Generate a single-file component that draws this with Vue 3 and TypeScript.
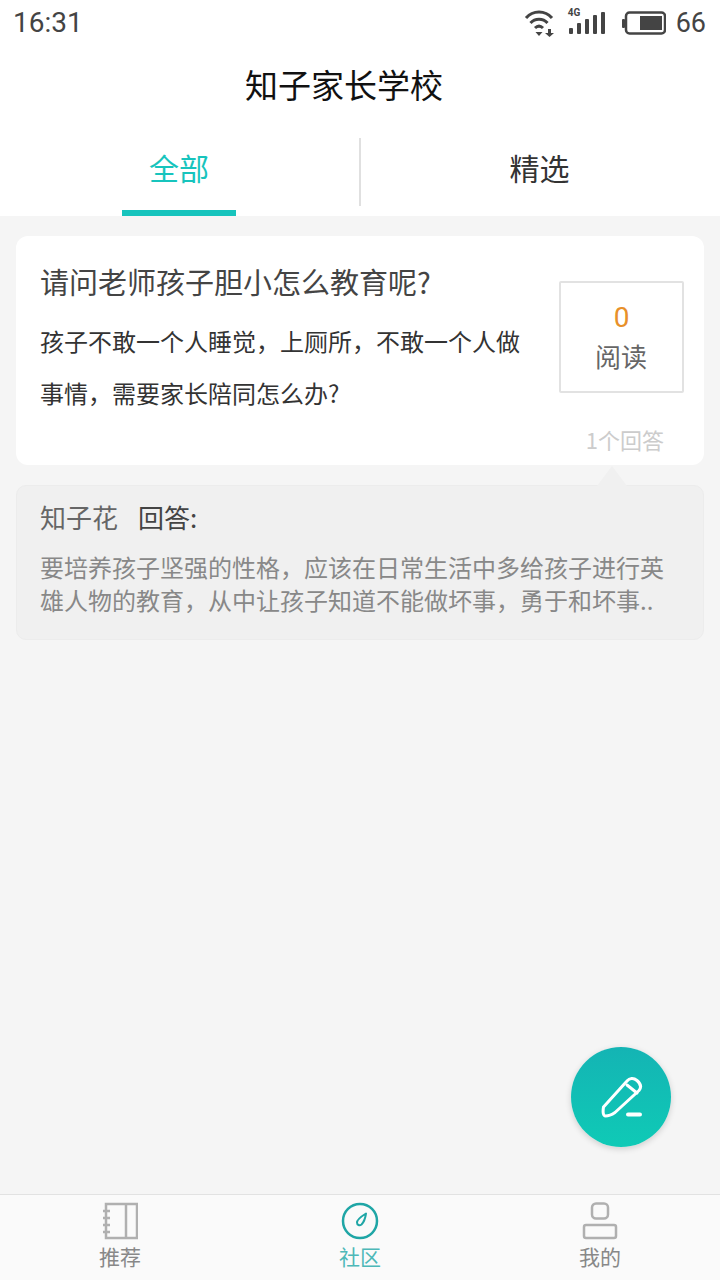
<template>
  <div class="page">
    <header class="status">
      <span class="status-time">16:31</span>
      <div class="status-right">
        <svg width="32" height="30" viewBox="0 0 32 30" class="wifi">
          <path d="M2 10 C9 2 21 2 28 10" fill="none" stroke="#444" stroke-width="3" />
          <path d="M6.500 15 C11 10 19 10 23.500 15" fill="none" stroke="#444" stroke-width="3" />
          <path d="M11 20 C13.500 17.500 16.500 17.500 19 20" fill="none" stroke="#444" stroke-width="3" />
          <path d="M11.500 24 H18.500 L15 28 Z" fill="#444" />
          <path d="M24 21 H27 V25 H30 L25.500 29 L21 25 H24 Z" fill="#444" />
        </svg>
        <div class="signal">
          <span class="net">4G</span>
          <svg width="38" height="24" viewBox="0 0 38 24">
            <rect x="1" y="17" width="4" height="6" rx="1" fill="#444" />
            <rect x="9" y="12" width="4" height="11" rx="1" fill="#444" />
            <rect x="17" y="8" width="4" height="15" rx="1" fill="#444" />
            <rect x="25" y="4" width="4" height="19" rx="1" fill="#444" />
            <rect x="33" y="1" width="4" height="22" rx="1" fill="#444" />
          </svg>
        </div>
        <svg width="44" height="24" viewBox="0 0 44 24" class="battery">
          <rect x="0" y="8" width="3" height="9" rx="1" fill="#444" />
          <rect x="4" y="1.500" width="39" height="21" rx="3.500" fill="none" stroke="#444" stroke-width="2.500" />
          <rect x="18" y="5" width="22" height="14" fill="#444" />
        </svg>
        <span class="status-level">66</span>
      </div>
    </header>

    <h1 class="title">知子家长学校</h1>

    <nav class="tabs">
      <div v-for="(tab, i) in tabs" :key="tab" class="tab" :class="{ 'tab--on': i === 0 }">
        {{ tab }}
      </div>
    </nav>

    <main class="content">
      <section class="card">
        <div class="card-main">
          <div class="card-text">
            <h2 class="question">请问老师孩子胆小怎么教育呢?</h2>
            <p class="desc">孩子不敢一个人睡觉，上厕所，不敢一个人做事情，需要家长陪同怎么办?</p>
          </div>
          <div class="reads">
            <span class="reads-num">0</span>
            <span class="reads-label">阅读</span>
          </div>
        </div>
        <div class="answers-count">1个回答</div>
      </section>

      <section class="answer">
        <div class="answer-head">
          <span class="answer-name">知子花</span>
          <span class="answer-tag">回答:</span>
        </div>
        <p class="answer-body">要培养孩子坚强的性格，应该在日常生活中多给孩子进行英雄人物的教育，从中让孩子知道不能做坏事，勇于和坏事..</p>
      </section>

      <button class="fab" type="button" aria-label="提问">
        <svg width="44" height="44" viewBox="0 0 44 44" fill="none" stroke="#fff" stroke-width="3" stroke-linecap="round" stroke-linejoin="round">
          <path d="M4.500 32 L28 6 C30.500 3 34.500 2.500 38 5.500 C42 9 42.500 12.500 40 15.500 L16 37.500 C13 39.500 9 41 6.500 41 C4.500 41 3.500 38 4.500 32 Z" />
          <path d="M28 10 L38 18" />
          <path d="M29 39.500 H41" stroke-width="4" />
        </svg>
      </button>
    </main>

    <footer class="bottom">
      <div class="bottom-item">
        <svg width="36" height="38" viewBox="0 0 36 38" fill="none" stroke="#b0b0b0" stroke-width="2.500">
          <rect x="4" y="2" width="31" height="34" />
          <path d="M24 2 V36" />
          <path d="M1 9 H8 M1 16 H8 M1 23 H8 M1 30 H8" />
        </svg>
        <span>推荐</span>
      </div>
      <div class="bottom-item bottom-item--on">
        <svg width="38" height="38" viewBox="0 0 38 38" fill="none" stroke="#1fa6a6">
          <circle cx="19" cy="19" r="17" stroke-width="2.500" />
          <path d="M25 11.500 C24.500 15 23 20 20.500 22.500 C18.500 24 16 23 16 20.500 C16 18 21 14 25 11.500 Z" stroke-width="2" stroke-linejoin="round" />
        </svg>
        <span>社区</span>
      </div>
      <div class="bottom-item">
        <svg width="36" height="38" viewBox="0 0 36 38" fill="none" stroke="#b0b0b0" stroke-width="2.500">
          <rect x="10" y="1.500" width="16" height="15" rx="4" />
          <rect x="2" y="23" width="32" height="13" rx="2" />
        </svg>
        <span>我的</span>
      </div>
    </footer>
  </div>
</template>

<script setup lang="ts">
const tabs = ['全部', '精选'];
</script>

<style>
html,
body {
  margin: 0;
  background: #f5f5f5;
}
</style>

<style scoped>
.page {
  display: flex;
  flex-direction: column;
  height: 1280px;
  background: #f5f5f5;
  font-family: 'Noto Sans CJK SC', 'Noto Sans', sans-serif;
  overflow: hidden;
}
.status {
  display: flex;
  justify-content: space-between;
  align-items: center;
  height: 45px;
  padding: 0 14px 0 13px;
  background: #fff;
  color: #444;
}
.status-time {
  font-family: Roboto, sans-serif;
  font-size: 28px;
}
.status-level {
  font-family: Roboto, sans-serif;
  font-size: 27px;
}
.status-right {
  display: flex;
  align-items: center;
}
.wifi {
  margin-right: 12px;
}
.signal {
  position: relative;
  margin-right: 16px;
  height: 24px;
}
.net {
  position: absolute;
  left: 0;
  top: -4px;
  font-family: Roboto, sans-serif;
  font-size: 10px;
  font-weight: 700;
  color: #444;
}
.battery {
  margin-right: 10px;
}
.title {
  margin: 0;
  height: 85px;
  padding-right: 32px;
  line-height: 78px;
  background: #fff;
  color: #111;
  font-size: 33px;
  font-weight: 400;
  text-align: center;
}
.tabs {
  display: flex;
  height: 86px;
  background: #fff;
}
.tab {
  position: relative;
  flex: 1;
  line-height: 74px;
  color: #333;
  font-size: 30px;
  text-align: center;
}
.tab--on {
  flex: 0 0 359px;
  box-sizing: border-box;
  padding-right: 1px;
  color: #17c4bd;
}
.tab + .tab::before {
  content: '';
  position: absolute;
  left: 0;
  top: 8px;
  width: 2px;
  height: 68px;
  background: #e0e0e0;
}
.tab--on::after {
  content: '';
  position: absolute;
  left: 50%;
  bottom: 0;
  width: 114px;
  height: 6px;
  margin-left: -58px;
  background: #17c4bd;
}
.content {
  position: relative;
  flex: 1;
  display: flex;
  flex-direction: column;
  gap: 20px;
  padding: 20px 16px 0;
}
.card {
  height: 229px;
  box-sizing: border-box;
  padding: 23px 20px 0 24px;
  background: #fff;
  border-radius: 12px;
}
.card-main {
  display: flex;
  justify-content: space-between;
}
.card-text {
  width: 482px;
}
.question {
  margin: 0;
  color: #444;
  font-size: 29px;
  font-weight: 400;
  line-height: 44px;
}
.desc {
  margin: 12px 0 0;
  color: #333;
  font-size: 24px;
  line-height: 52px;
}
.reads {
  display: flex;
  flex-direction: column;
  align-items: center;
  width: 125px;
  height: 112px;
  box-sizing: border-box;
  margin-top: 22px;
  padding-top: 16px;
  border: 2px solid #e2e2e2;
  border-radius: 2px;
}
.reads-num {
  color: #e8902a;
  font-family: Roboto, sans-serif;
  font-size: 28px;
  line-height: 38px;
}
.reads-label {
  padding-right: 1px;
  color: #666;
  font-size: 26px;
  line-height: 38px;
}
.answers-count {
  margin-top: 2px;
  padding-right: 20px;
  color: #ccc;
  font-size: 22px;
  line-height: 36px;
  text-align: right;
}
.answer {
  position: relative;
  height: 155px;
  box-sizing: border-box;
  padding: 13px 23px 0;
  background: #f0f0f0;
  border: 1px solid #ececec;
  border-radius: 10px;
}
.answer::before {
  content: '';
  position: absolute;
  right: 76px;
  top: -20px;
  border-left: 15px solid transparent;
  border-right: 15px solid transparent;
  border-bottom: 20px solid #f0f0f0;
}
.answer-head {
  display: flex;
  gap: 20px;
  font-size: 26px;
  line-height: 36px;
}
.answer-name {
  color: #666;
}
.answer-tag {
  color: #444;
}
.answer-body {
  margin: 15px 0 0;
  color: #888;
  font-size: 24px;
  line-height: 33px;
}
.fab {
  position: absolute;
  left: 571px;
  top: 831px;
  display: flex;
  align-items: center;
  justify-content: center;
  width: 100px;
  height: 100px;
  padding: 0;
  border: 0;
  border-radius: 50%;
  background: linear-gradient(180deg, #14b4b4, #0fcab6);
  box-shadow: 0 2px 6px rgba(0, 0, 0, 0.16);
}
.bottom {
  display: flex;
  height: 86px;
  box-sizing: border-box;
  background: #fafafa;
  border-top: 1px solid #e2e2e2;
}
.bottom-item {
  flex: 1;
  display: flex;
  flex-direction: column;
  align-items: center;
  padding-top: 7px;
  color: #888;
  font-size: 21px;
  line-height: 32px;
}
.bottom-item--on {
  color: #4db8b8;
}
</style>
